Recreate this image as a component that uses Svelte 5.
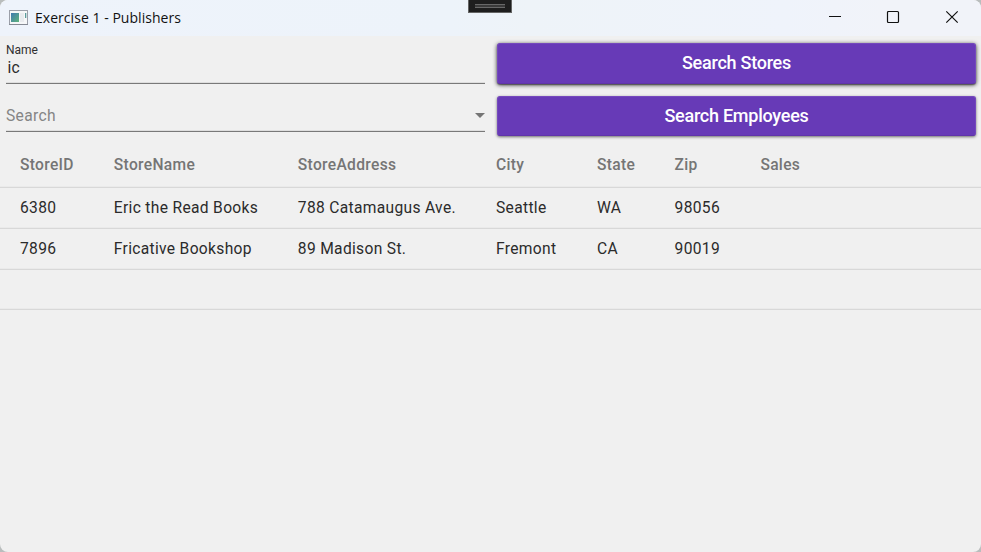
<script>
  const columns = [
    { key: 'id', label: 'StoreID', width: 93.8 },
    { key: 'name', label: 'StoreName', width: 184 },
    { key: 'address', label: 'StoreAddress', width: 198.2 },
    { key: 'city', label: 'City', width: 101 },
    { key: 'state', label: 'State', width: 77.6 },
    { key: 'zip', label: 'Zip', width: 85.8 },
    { key: 'sales', label: 'Sales', width: 220 }
  ];
  const stores = [
    { id: '6380', name: 'Eric the Read Books', address: '788 Catamaugus Ave.', city: 'Seattle', state: 'WA', zip: '98056', sales: '' },
    { id: '7896', name: 'Fricative Bookshop', address: '89 Madison St.', city: 'Fremont', state: 'CA', zip: '90019', sales: '' },
    {}
  ];
</script>

<div class="window">
  <header class="titlebar">
    <svg class="app-icon" width="20" height="16" viewBox="0 0 20 16">
      <defs>
        <linearGradient id="pane" x1="0" y1="0" x2="1" y2="1">
          <stop offset="0" stop-color="#3f79b0" />
          <stop offset="1" stop-color="#5fb47c" />
        </linearGradient>
      </defs>
      <rect x="0.5" y="0.5" width="18" height="14" fill="#f6f7f8" stroke="#9b9fa9" />
      <rect x="0" y="14" width="19" height="1" fill="#858993" />
      <rect x="2" y="3" width="8" height="9" fill="url(#pane)" />
      <rect x="11" y="3" width="4" height="9" fill="#e9ebee" />
      <rect x="16" y="3" width="1.3" height="5" fill="#5b9b9b" />
    </svg>
    <span class="title">Exercise 1 - Publishers</span>
    <div class="controls">
      <svg width="14" height="14" viewBox="0 0 14 14"><path d="M1 6.5H13" /></svg>
      <svg width="14" height="14" viewBox="0 0 14 14"><rect x="1.5" y="1.5" width="11" height="11" rx="1" /></svg>
      <svg width="14" height="14" viewBox="0 0 14 14"><path d="M1.3 1.3 12.7 12.7M12.7 1.3 1.3 12.7" /></svg>
    </div>
    <div class="grip"><i></i></div>
  </header>

  <section class="form">
    <div class="field name">
      <span class="label">Name</span>
      <span class="value">ic</span>
    </div>
    <button class="raised"><span>Search Stores</span></button>
    <div class="field search">
      <span class="hint">Search</span>
      <svg width="10" height="5" viewBox="0 0 10 5"><path d="M0 0H10L5 5Z" fill="#757575" /></svg>
    </div>
    <button><span>Search Employees</span></button>
  </section>

  <section class="grid">
    <div class="row head">
      {#each columns as col}
        <div style="width: {col.width}px">{col.label}</div>
      {/each}
    </div>
    {#each stores as store}
      <div class="row">
        {#each columns as col}
          <div style="width: {col.width}px">{store[col.key] ?? ''}</div>
        {/each}
      </div>
    {/each}
  </section>
</div>

<style>
  :global(body) { background: #b9bdbd; overflow: hidden; }
  .window {
    width: 981px; height: 552px; box-sizing: border-box; overflow: hidden;
    border-radius: 8px; background: #f0f0f0;
    font-family: Roboto, sans-serif; color: #2b2b2b;
  }
  .titlebar {
    position: relative; display: flex; align-items: center; height: 36px; padding-left: 9px;
    background: linear-gradient(90deg, #eef3fb 0%, #edf3fa 46%, #eef3f8 54%, #eff3fb 80%, #f1f3f9 90%);
  }
  .app-icon { margin-bottom: 1px; }
  .title {
    margin-left: 6px; font: 14px/20px "Open Sans", sans-serif; letter-spacing: 0.04px;
    color: #111; white-space: nowrap;
  }
  .controls { display: flex; margin-left: auto; padding-right: 22px; margin-bottom: 2px; }
  .controls svg { fill: none; stroke: #111; stroke-width: 1.2; }
  .controls svg:nth-child(2) { margin: 0 45px 0 44px; }
  .grip {
    position: absolute; left: 468px; top: 0; width: 44px; height: 13px; box-sizing: border-box;
    border: 1px solid #646464; border-top: 0; background: #1e1e1e;
  }
  .grip i {
    display: block; width: 30px; height: 4px; margin: 4px auto 0; box-sizing: border-box;
    border: solid #686868; border-width: 1px 0; background: #3a3a3a;
  }
  .form {
    display: grid; grid-template-columns: 479px 479px; grid-template-rows: 41px 40px;
    column-gap: 12px; row-gap: 12px; padding: 7px 6px 0; height: 106px; box-sizing: border-box;
  }
  .field { box-sizing: border-box; border-bottom: 1px solid #797979; box-shadow: inset 0 -1px #dedede; }
  .field.name { display: flex; flex-direction: column; }
  .label { font-size: 12px; line-height: 14px; color: #303030; }
  .value { font-size: 15.6px; line-height: 20px; margin: 1px 0 0 1.5px; letter-spacing: 0.33px; }
  .field.search { display: flex; align-items: center; height: 36px; padding-top: 4px; }
  .field.search svg { margin-left: auto; }
  .hint { font-size: 15.6px; letter-spacing: 0.33px; color: #858585; }
  button {
    padding: 0; border: 1px solid #7549bd; border-bottom-color: #6034aa; border-radius: 3px;
    background: #673ab7; color: #fff; font: 500 18px/20px Roboto, sans-serif; letter-spacing: -0.25px;
    box-shadow: 0 1px 3px rgba(0, 0, 0, 0.55);
  }
  button.raised { padding-bottom: 2px; box-shadow: 0 1px 4px rgba(0, 0, 0, 0.8), 0 1px 1px rgba(0, 0, 0, 0.3); }
  .row {
    display: flex; align-items: center; height: 41px; box-sizing: border-box; padding-left: 20px;
    border-bottom: 1px solid #d8d8d8; box-shadow: inset 0 -1px #eaeaea;
    font-size: 15.6px; line-height: 20px; letter-spacing: 0.32px;
  }
  .row > div { flex: none; white-space: nowrap; }
  .row.head { height: 46px; font-weight: 500; color: #757575; }
  .row:last-child { height: 40px; }
</style>
